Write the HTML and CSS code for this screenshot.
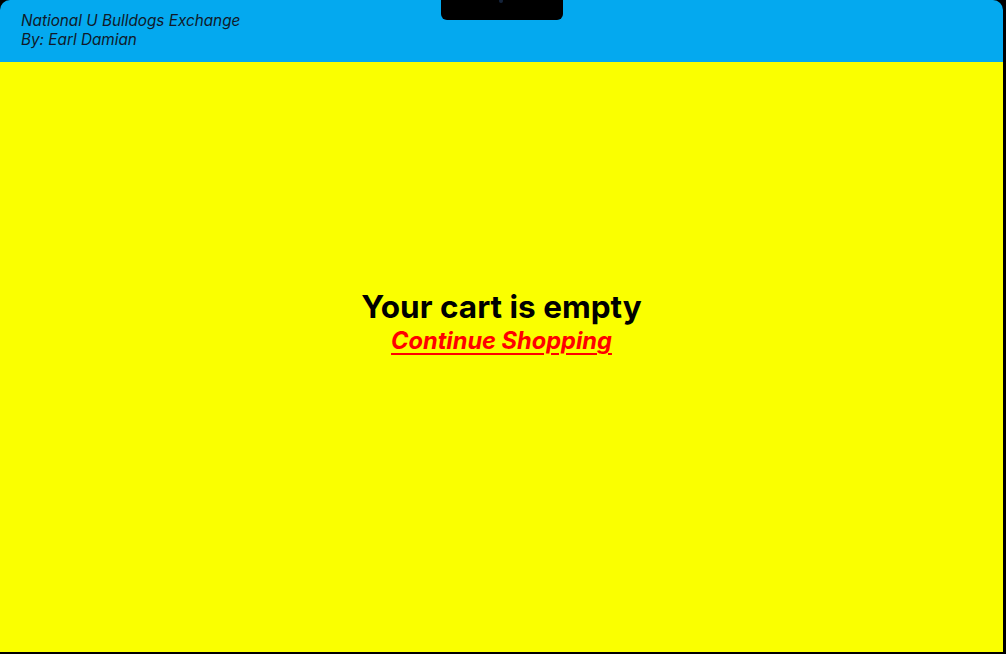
FILE: index.html
```html
<!DOCTYPE html>
<html lang="en">
<head>
<meta charset="utf-8">
<title>Cart</title>
<link rel="stylesheet" href="styles.css">
</head>
<body>
<div class="device">
  <header class="topbar">
    <div class="brand">
      <div>National U Bulldogs Exchange</div>
      <div>By: Earl Damian</div>
    </div>
    <div class="notch"><span class="cam"></span></div>
  </header>
  <main class="cart">
    <h1 class="cart-title">Your cart is empty</h1>
    <a class="cart-link" href="#">Continue Shopping</a>
  </main>
</div>
</body>
</html>
```
FILE: styles.css
```css
html, body {
  margin: 0;
  padding: 0;
  height: 100%;
}
body {
  background: #000;
  font-family: Inter, "Noto Sans", sans-serif;
  overflow: hidden;
}
.device {
  height: 652px;
  margin-right: 3px;
  border-radius: 10px 10px 0 0;
  overflow: hidden;
  display: flex;
  flex-direction: column;
}
.topbar {
  position: relative;
  height: 62px;
  flex: 0 0 62px;
  background: #04a9ef;
  box-sizing: border-box;
  padding: 11px 0 0 21px;
}
.brand {
  font-style: italic;
  font-size: 15.3px;
  line-height: 19px;
  color: #101a2a;
}
.notch {
  position: absolute;
  top: 0;
  left: 441px;
  width: 122px;
  height: 20px;
  background: #000;
  border-radius: 0 0 6px 6px;
}
.cam {
  position: absolute;
  left: 58px;
  top: -1px;
  width: 4px;
  height: 4px;
  border-radius: 50%;
  background: #14233a;
}
.cart {
  flex: 1;
  background: #faff00;
  display: flex;
  flex-direction: column;
  align-items: center;
  justify-content: center;
  padding-bottom: 68px;
}
.cart-title {
  margin: 0;
  font-size: 31.5px;
  font-weight: 700;
  line-height: 36px;
  color: #000;
}
.cart-link {
  font-size: 23.6px;
  font-weight: 700;
  font-style: italic;
  line-height: 32px;
  color: #ff0000;
  text-decoration: underline;
  text-decoration-thickness: 2px;
  text-underline-offset: 4px;
}
```
